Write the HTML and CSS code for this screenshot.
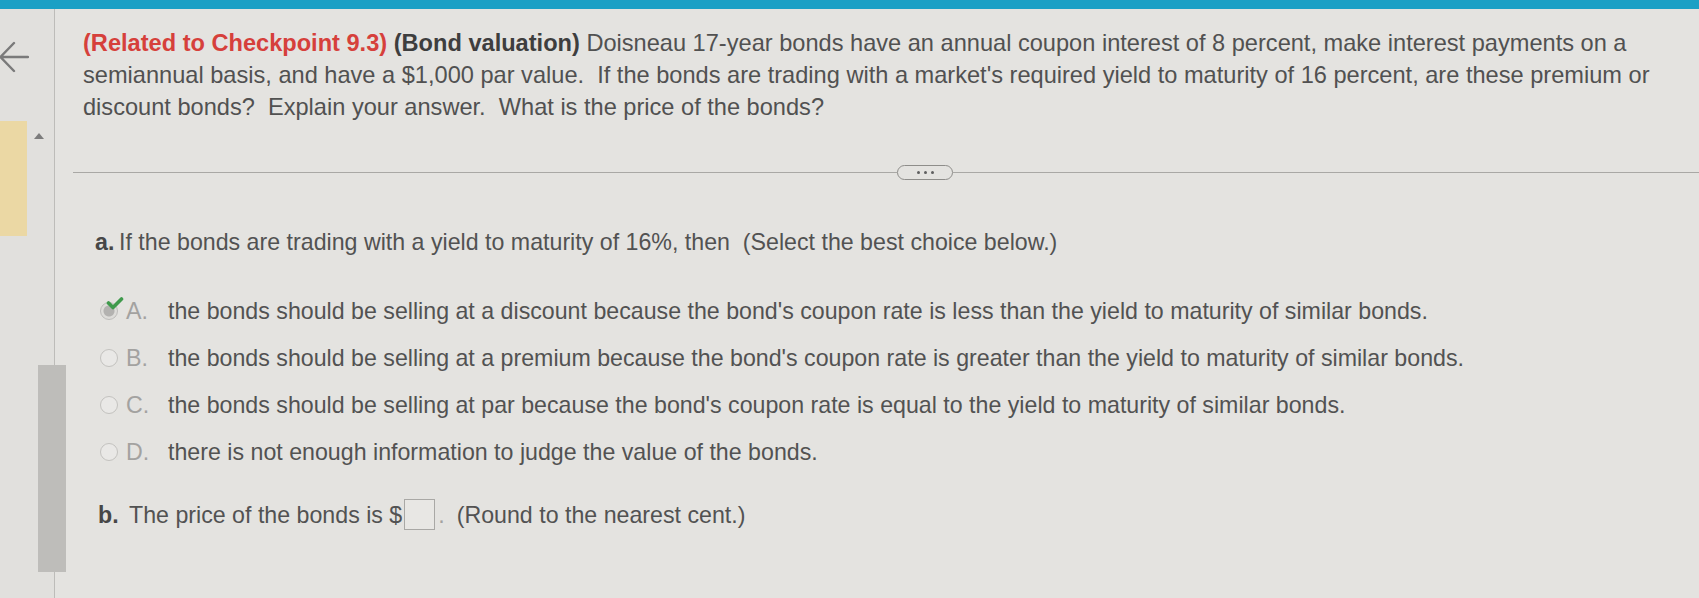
FILE: index.html
```html
<!DOCTYPE html>
<html lang="en">
<head>
<meta charset="utf-8">
<title>Bond valuation</title>
<link rel="stylesheet" href="styles.css">
</head>
<body>
<div class="topbar"></div>
<div class="frame">
  <aside class="sidebar">
    <svg class="back" width="30" height="40" viewBox="0 0 30 40" aria-hidden="true">
      <path d="M29 20 H2 M15 6 L1.5 20 L15 34" fill="none" stroke="#7a7a7a" stroke-width="2.4" stroke-linecap="round" stroke-linejoin="round"/>
    </svg>
    <div class="rail">
      <div class="marker"></div>
      <div class="caret"></div>
    </div>
    <div class="thumb"></div>
  </aside>
  <main class="content">
    <p class="question"><span class="ref">(Related to Checkpoint 9.3)</span> <span class="topic">(Bond valuation)</span> Doisneau 17-year bonds have an annual coupon interest of 8 percent, make interest payments on a<br>semiannual basis, and have a $1,000 par value.&nbsp; If the bonds are trading with a market's required yield to maturity of 16 percent, are these premium or<br>discount bonds?&nbsp; Explain your answer.&nbsp; What is the price of the bonds?</p>
    <div class="divider">
      <div class="rule rule-left"></div>
      <div class="more"><span></span><span></span><span></span></div>
      <div class="rule rule-right"></div>
    </div>
    <div class="part">
      <span class="part-label">a.</span>
      <span>If the bonds are trading with a yield to maturity of 16%, then&nbsp; (Select the best choice below.)</span>
    </div>
    <ul class="choices">
      <li class="choice selected">
        <span class="radio"><svg class="check" width="18" height="14" viewBox="0 0 18 14" aria-hidden="true"><path d="M2.5 6 L7 10.5 L15.5 2" fill="none" stroke="#3f9a4c" stroke-width="3.6" stroke-linecap="round" stroke-linejoin="round"/></svg></span>
        <span class="letter">A.</span>
        <span class="text">the bonds should be selling at a discount because the bond's coupon rate is less than the yield to maturity of similar bonds.</span>
      </li>
      <li class="choice">
        <span class="radio"></span>
        <span class="letter">B.</span>
        <span class="text">the bonds should be selling at a premium because the bond's coupon rate is greater than the yield to maturity of similar bonds.</span>
      </li>
      <li class="choice">
        <span class="radio"></span>
        <span class="letter">C.</span>
        <span class="text">the bonds should be selling at par because the bond's coupon rate is equal to the yield to maturity of similar bonds.</span>
      </li>
      <li class="choice">
        <span class="radio"></span>
        <span class="letter">D.</span>
        <span class="text">there is not enough information to judge the value of the bonds.</span>
      </li>
    </ul>
    <div class="part part-b">
      <span class="part-label">b.</span>
      <span>The price of the bonds is $</span><span class="answer"></span><span class="dot">.</span><span class="hint">(Round to the nearest cent.)</span>
    </div>
  </main>
</div>
</body>
</html>
```
FILE: styles.css
```css
html, body {
  margin: 0;
  padding: 0;
}
body {
  width: 1699px;
  height: 598px;
  overflow: hidden;
  background: #e4e3e0;
  font-family: "Liberation Sans", Arial, sans-serif;
  color: #4e4e4e;
}
.topbar {
  height: 9px;
  background: #1ba0c5;
}
.frame {
  display: flex;
  height: 589px;
}
.sidebar {
  width: 54px;
  flex: none;
  border-right: 1px solid #bdbcb9;
  background: #e1e0dd;
  display: flex;
  flex-direction: column;
}
.back {
  display: block;
  margin-top: 28px;
  margin-left: -1px;
}
.rail {
  display: flex;
  margin-top: 44px;
}
.marker {
  width: 27px;
  height: 115px;
  background: #ebd8a4;
}
.caret {
  width: 0;
  height: 0;
  margin-top: 12px;
  margin-left: 7px;
  border-left: 5px solid transparent;
  border-right: 5px solid transparent;
  border-bottom: 6px solid #7c7c7c;
}
.thumb {
  width: 28px;
  height: 207px;
  margin-top: 129px;
  margin-left: 38px;
  background: #bebdba;
}
.content {
  flex: 1;
  min-width: 0;
  padding-top: 18px;
}
.question {
  margin: 0 0 0 28px;
  font-size: 23.6px;
  line-height: 32px;
  white-space: nowrap;
  color: #515151;
}
.ref {
  color: #d6403b;
  font-weight: bold;
}
.topic {
  color: #3e3e3e;
  font-weight: bold;
}
.divider {
  display: flex;
  align-items: center;
  margin-top: 42px;
  margin-left: 18px;
  height: 15px;
}
.rule {
  height: 1px;
  background: #a9a8a5;
}
.rule-left {
  width: 824px;
}
.rule-right {
  flex: 1;
}
.more {
  width: 54px;
  height: 13px;
  border: 1px solid #8e8d8a;
  border-radius: 8px;
  display: flex;
  align-items: center;
  justify-content: center;
  gap: 4px;
}
.more span {
  width: 3px;
  height: 3px;
  border-radius: 50%;
  background: #5f5f5f;
}
.part {
  display: flex;
  align-items: center;
  margin-top: 47px;
  margin-left: 40px;
  font-size: 23.2px;
  line-height: 30px;
  white-space: nowrap;
  color: #525252;
}
.part-label {
  font-weight: bold;
  color: #474747;
  width: 24px;
}
.choices {
  list-style: none;
  margin: 39px 0 0 45px;
  padding: 0;
  display: flex;
  flex-direction: column;
  gap: 17px;
  color: #525252;
}
.choice {
  display: flex;
  align-items: center;
  font-size: 23.2px;
  line-height: 30px;
  white-space: nowrap;
}
.radio {
  position: relative;
  width: 16px;
  height: 16px;
  border: 1.5px solid #c3c2bf;
  border-radius: 50%;
  background: #e9e8e6;
  flex: none;
}
.selected .radio {
  border-color: #bdbcba;
  background: radial-gradient(circle, #b3b2b0 0 5px, #dddcd9 6px);
}
.check {
  position: absolute;
  left: 5px;
  top: -6px;
}
.letter {
  width: 42px;
  margin-left: 8px;
  color: #a3a2a0;
}
.part-b {
  margin-top: 32px;
  margin-left: 43px;
}
.part-b .part-label {
  width: 31px;
}
.answer {
  display: inline-block;
  width: 29px;
  height: 29px;
  margin-left: 2px;
  border: 1px solid #a9a8a5;
  background: #e8e7e4;
}
.dot {
  color: #a3a2a0;
  margin: 0 12px 0 3px;
}
```
